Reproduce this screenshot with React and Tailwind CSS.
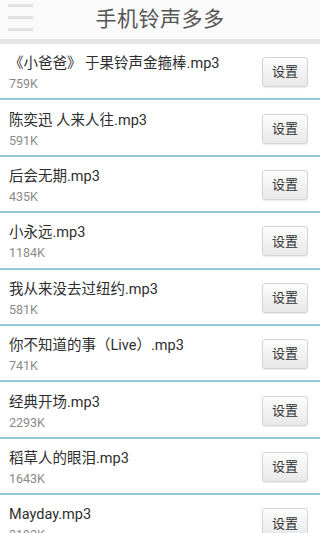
import React from "react";

const songs = [
  { name: "《小爸爸》 于果铃声金箍棒.mp3", size: "759K" },
  { name: "陈奕迅  人来人往.mp3", size: "591K" },
  { name: "后会无期.mp3", size: "435K" },
  { name: "小永远.mp3", size: "1184K" },
  { name: "我从来没去过纽约.mp3", size: "581K" },
  { name: "你不知道的事（Live）.mp3", size: "741K" },
  { name: "经典开场.mp3", size: "2293K" },
  { name: "稻草人的眼泪.mp3", size: "1643K" },
  { name: "Mayday.mp3", size: "3192K" },
];

function SongRow({ song }) {
  return (
    <div className="flex h-[56.4px] shrink-0 flex-col border-b-2 border-[#93c9d4] bg-white">
      <div className="flex flex-1 items-center pl-[9px] pr-[12px]">
        <div className="flex min-w-0 flex-1 flex-col pt-[4px]">
          <span className="text-[14.5px] leading-[20px] text-[#2e2e2e]">{song.name}</span>
          <span className="mt-[2px] text-[12.5px] leading-[16px] text-[#8a8a8a]">{song.size}</span>
        </div>
        <button className="mt-[2px] h-[30px] w-[46px] rounded-[3px] border border-[#d4d4d4] bg-gradient-to-b from-[#fdfdfd] to-[#e8e8e8] text-[13px] text-[#333] shadow-[0_1px_1px_rgba(0,0,0,0.08)]">
          设置
        </button>
      </div>
    </div>
  );
}

export default function App() {
  return (
    <div
      className="flex h-[533px] w-[320px] flex-col overflow-hidden bg-white"
      style={{ fontFamily: 'Roboto, "Noto Sans CJK SC", sans-serif' }}
    >
      <header className="relative flex h-[39px] shrink-0 items-center justify-center bg-[#fafafa]">
        <div className="absolute left-[8px] top-[4px] flex flex-col gap-[9.5px]">
          <span className="block h-[2.5px] w-[25px] bg-[#e2e2e2]" />
          <span className="block h-[2.5px] w-[25px] bg-[#e2e2e2]" />
          <span className="block h-[2.5px] w-[25px] bg-[#e2e2e2]" />
        </div>
        <h1 className="text-[21px] leading-none tracking-[0.5px] text-[#555]">手机铃声多多</h1>
      </header>
      <div className="h-[5px] shrink-0 bg-[#e6e6e6]" />
      <div className="flex flex-col">
        {songs.map((s) => (
          <SongRow key={s.name} song={s} />
        ))}
      </div>
    </div>
  );
}
